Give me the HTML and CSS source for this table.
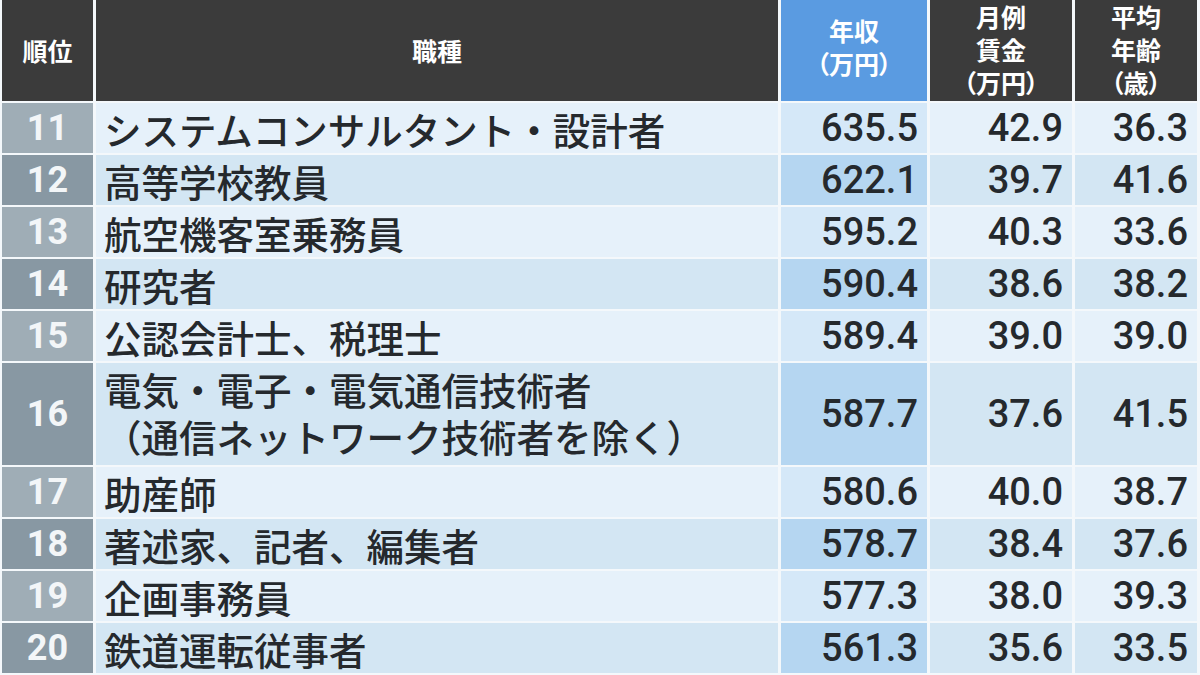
FILE: index.html
```html
<!DOCTYPE html>
<html lang="ja">
<head>
<meta charset="utf-8">
<link rel="stylesheet" href="styles.css">
</head>
<body>
<div class="table">
  <div class="hd rank-h">順位</div>
  <div class="hd job-h">職種</div>
  <div class="hd inc-h">年収<br>（万円）</div>
  <div class="hd">月例<br>賃金<br>（万円）</div>
  <div class="hd">平均<br>年齢<br>（歳）</div>

  <div class="rank odd">11</div><div class="job odd">システムコンサルタント・設計者</div><div class="num inc odd">635.5</div><div class="num odd">42.9</div><div class="num odd">36.3</div>
  <div class="rank even">12</div><div class="job even">高等学校教員</div><div class="num inc even">622.1</div><div class="num even">39.7</div><div class="num even">41.6</div>
  <div class="rank odd">13</div><div class="job odd">航空機客室乗務員</div><div class="num inc odd">595.2</div><div class="num odd">40.3</div><div class="num odd">33.6</div>
  <div class="rank even">14</div><div class="job even">研究者</div><div class="num inc even">590.4</div><div class="num even">38.6</div><div class="num even">38.2</div>
  <div class="rank odd">15</div><div class="job odd">公認会計士、税理士</div><div class="num inc odd">589.4</div><div class="num odd">39.0</div><div class="num odd">39.0</div>
  <div class="rank even tall">16</div><div class="job even tall two"><span class="line">電気・電子・電気通信技術者</span><span class="line">（通信ネットワーク技術者を除く）</span></div><div class="num inc even tall">587.7</div><div class="num even tall">37.6</div><div class="num even tall">41.5</div>
  <div class="rank odd">17</div><div class="job odd">助産師</div><div class="num inc odd">580.6</div><div class="num odd">40.0</div><div class="num odd">38.7</div>
  <div class="rank even">18</div><div class="job even">著述家、記者、編集者</div><div class="num inc even">578.7</div><div class="num even">38.4</div><div class="num even">37.6</div>
  <div class="rank odd">19</div><div class="job odd">企画事務員</div><div class="num inc odd">577.3</div><div class="num odd">38.0</div><div class="num odd">39.3</div>
  <div class="rank even">20</div><div class="job even">鉄道運転従事者</div><div class="num inc even">561.3</div><div class="num even">35.6</div><div class="num even">33.5</div>
</div>
</body>
</html>
```

FILE: styles.css
```css
html, body {
  margin: 0;
  padding: 0;
  background: #f4f8fb;
}

body {
  width: 1200px;
  height: 675px;
  overflow: hidden;
  font-family: "Noto Sans CJK JP", "Noto Sans", sans-serif;
}

.table {
  display: grid;
  grid-template-columns: 91px 682px 146px 142px 122px;
  grid-template-rows: 101px repeat(5, 50px) 102px repeat(4, 50px);
  column-gap: 3px;
  row-gap: 2px;
  padding-left: 2px;
}

.hd {
  background: #3b3b3b;
  color: #ffffff;
  font-size: 25px;
  font-weight: 700;
  line-height: 33px;
  text-align: center;
  display: flex;
  align-items: center;
  justify-content: center;
  padding-bottom: 2px;
  box-sizing: border-box;
  font-feature-settings: "palt";
}

.hd.rank-h,
.hd.job-h {
  padding-bottom: 0;
}

.hd.inc-h {
  background: #5a9be1;
  padding-bottom: 8px;
}

.rank {
  display: flex;
  align-items: center;
  justify-content: center;
  font-family: Roboto, "Noto Sans", sans-serif;
  font-weight: 700;
  font-size: 36px;
  color: #f3f6f8;
}

.rank.odd { background: #9fadb6; }
.rank.even { background: #8898a3; }

.job {
  display: flex;
  align-items: center;
  padding-left: 8px;
  font-size: 37.5px;
  font-weight: 500;
  color: #25292d;
  white-space: nowrap;
}

.job.two {
  flex-direction: column;
  align-items: flex-start;
  justify-content: center;
  padding-bottom: 4px;
  box-sizing: border-box;
}

.job.two .line {
  display: block;
  line-height: 47px;
}

.odd { background: #e6f1fa; }
.even { background: #d3e6f3; }

.num {
  display: flex;
  align-items: center;
  justify-content: flex-end;
  padding-right: 9px;
  font-family: Roboto, "Noto Sans", sans-serif;
  font-weight: 500;
  font-size: 38px;
  color: #25292d;
}

.num.inc.odd { background: #d5e8f8; }
.num.inc.even { background: #b5d6f1; }
```
